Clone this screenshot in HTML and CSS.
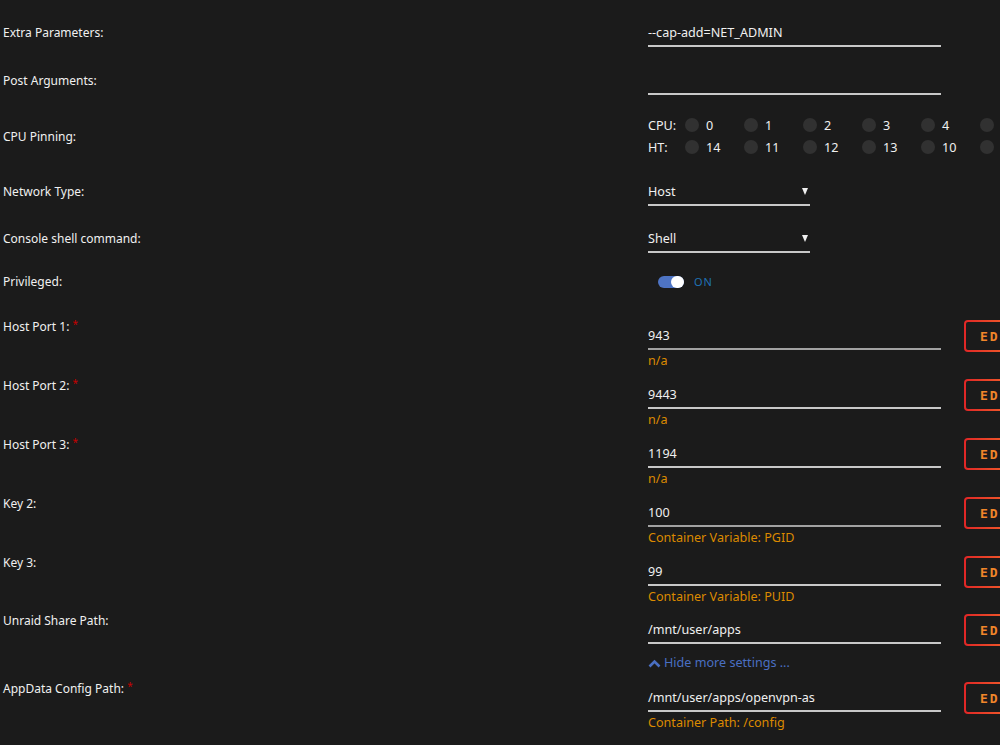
FILE: index.html
```html
<!DOCTYPE html>
<html>
<head>
<title>openvpn-as</title>
<link rel="stylesheet" href="styles.css">
</head>
<body>
<div class="form">

<div class="row r-extra">
<div class="label">Extra Parameters:</div>
<div class="value"><div class="field">--cap-add=NET_ADMIN</div></div>
</div>

<div class="row r-post">
<div class="label">Post Arguments:</div>
<div class="value"><div class="field"></div></div>
</div>

<div class="row r-cpu">
<div class="label">CPU Pinning:</div>
<div class="value pins">
<div class="pinline"><span class="pinname">CPU:</span>
<span class="pin"><i></i>0</span><span class="pin"><i></i>1</span><span class="pin"><i></i>2</span><span class="pin"><i></i>3</span><span class="pin"><i></i>4</span><span class="pin"><i></i>5</span>
</div>
<div class="pinline"><span class="pinname">HT:</span>
<span class="pin"><i></i>14</span><span class="pin"><i></i>11</span><span class="pin"><i></i>12</span><span class="pin"><i></i>13</span><span class="pin"><i></i>10</span><span class="pin"><i></i>15</span>
</div>
</div>
</div>

<div class="row r-net">
<div class="label">Network Type:</div>
<div class="value"><div class="field select"><span>Host</span><span class="arrow"></span></div></div>
</div>

<div class="row r-shell">
<div class="label">Console shell command:</div>
<div class="value"><div class="field select"><span>Shell</span><span class="arrow"></span></div></div>
</div>

<div class="row r-priv">
<div class="label">Privileged:</div>
<div class="value"><div class="toggle"><span class="switch"><span class="knob"></span></span><span class="on">ON</span></div></div>
</div>

<div class="row port">
<div class="label">Host Port 1: <sup class="req">*</sup></div>
<div class="value"><div class="col"><div class="field dim">943</div><div class="help">n/a</div></div><div class="edit">EDIT</div></div>
</div>

<div class="row port">
<div class="label">Host Port 2: <sup class="req">*</sup></div>
<div class="value"><div class="col"><div class="field">9443</div><div class="help">n/a</div></div><div class="edit">EDIT</div></div>
</div>

<div class="row port">
<div class="label">Host Port 3: <sup class="req">*</sup></div>
<div class="value"><div class="col"><div class="field">1194</div><div class="help">n/a</div></div><div class="edit">EDIT</div></div>
</div>

<div class="row port">
<div class="label">Key 2:</div>
<div class="value"><div class="col"><div class="field dim">100</div><div class="help">Container Variable: PGID</div></div><div class="edit">EDIT</div></div>
</div>

<div class="row port r-key3">
<div class="label">Key 3:</div>
<div class="value"><div class="col"><div class="field">99</div><div class="help">Container Variable: PUID</div></div><div class="edit">EDIT</div></div>
</div>

<div class="row port r-share">
<div class="label">Unraid Share Path:</div>
<div class="value"><div class="col"><div class="field">/mnt/user/apps</div>
<div class="more"><svg width="13" height="9" viewBox="0 0 13 9"><path d="M1.5 7.5 L6.5 2.5 L11.5 7.5" fill="none" stroke="#4a6fc2" stroke-width="2.6"/></svg>Hide more settings ...</div></div><div class="edit">EDIT</div></div>
</div>

<div class="row port">
<div class="label">AppData Config Path: <sup class="req">*</sup></div>
<div class="value"><div class="col"><div class="field">/mnt/user/apps/openvpn-as</div><div class="help">Container Path: /config</div></div><div class="edit">EDIT</div></div>
</div>

</div>
</body>
</html>
```

FILE: styles.css
```css
html{
background-color:#1b1b1b;}
body{
margin:0;
padding:0 0 0 3px;
overflow:hidden;
color:#f0f0f0;
font-family:"Noto Sans","Open Sans",sans-serif;
font-size:12.6px;
line-height:16px;}
.form{
padding-top:21px;}
.row{
display:grid;
grid-template-columns:645px 1fr;}
.label{
padding-top:4px;
font-size:12px;}
.req{
color:#c80000;
font-size:10px;
line-height:0;
vertical-align:3px;}
.field{
width:293px;
height:16px;
padding:4px 0;
border-bottom:2px solid #c8c8c8;
white-space:nowrap;}
.field.dim{
border-bottom-color:#a2a2a2;}
.select{
width:162px;
display:flex;
justify-content:space-between;
align-items:center;}
.arrow{
width:0;
height:0;
margin-right:2px;
margin-top:-2px;
border-left:3.5px solid transparent;
border-right:3.5px solid transparent;
border-top:7px solid #f0f0f0;}
.r-extra{margin-bottom:22px;}
.r-post{margin-bottom:20px;}
.r-cpu{margin-bottom:21px;}
.r-cpu .label{
padding-top:0;
align-self:center;}
.r-net{margin-bottom:21px;}
.r-shell{margin-bottom:17px;}
.r-priv{margin-bottom:25px;}
.pinline{
display:flex;
align-items:center;
height:22px;
white-space:nowrap;}
.pinname{
width:37px;}
.pin{
display:flex;
align-items:center;
width:59px;
flex-shrink:0;}
.pin i{
width:14px;
height:14px;
border-radius:50%;
background-color:#313131;
margin-right:7px;
margin-top:-3px;}
.toggle{
display:flex;
align-items:center;
height:24px;
padding-left:10px;}
.switch{
display:flex;
justify-content:flex-end;
width:26px;
height:12px;
border-radius:6px;
background-color:#4e74c4;}
.knob{
width:13px;
height:12px;
border-radius:6px;
background-color:#fff;}
.on{
margin-left:10px;
color:#1f72b4;
font-size:11px;
letter-spacing:1px;}
.port{margin-bottom:9px;}
.port .label{padding-top:0;}
.port .value{
display:flex;
align-items:flex-start;}
.col{
margin-top:5px;}
.help{
margin-top:3px;
color:#dc8a00;
white-space:nowrap;}
.edit{
box-sizing:border-box;
flex-shrink:0;
width:80px;
height:32px;
margin-left:23px;
margin-top:1px;
padding-left:14px;
border:2px solid transparent;
border-radius:4px;
background:linear-gradient(#1b1b1b,#1b1b1b) padding-box,linear-gradient(90deg,#e02626,#ff8a2e) border-box;
color:#f0862a;
font-family:"DejaVu Sans Mono",monospace;
font-weight:bold;
font-size:13px;
letter-spacing:1.8px;
line-height:29px;}
.r-key3{margin-bottom:8px;}
.r-share{margin-bottom:10px;}
.r-share .col{margin-top:5px;}
.more{
display:flex;
align-items:center;
margin-top:11px;
color:#4a6fc2;
white-space:nowrap;}
.more svg{
margin-right:3px;}
```
